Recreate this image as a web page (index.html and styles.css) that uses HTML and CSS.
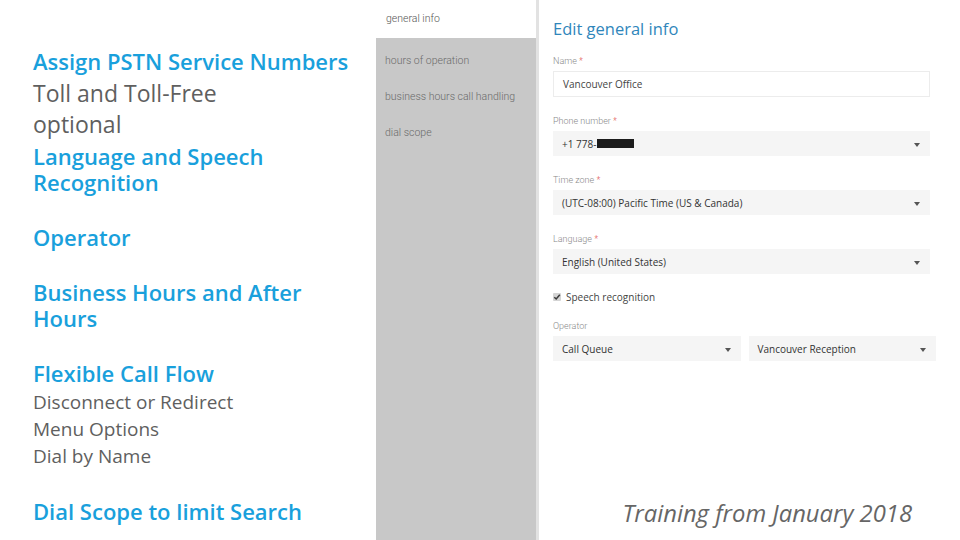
FILE: index.html
```html
<!DOCTYPE html>
<html>
<head>
<meta charset="utf-8">
<link rel="stylesheet" href="styles.css">
</head>
<body>
<div class="slide">
  <div class="points">
    <div class="group g-first">
      <div class="h">Assign PSTN Service Numbers</div>
      <div class="t">Toll and Toll-Free</div>
      <div class="t">optional</div>
      <div class="h">Language and Speech<br>Recognition</div>
    </div>
    <div class="group">
      <div class="h">Operator</div>
    </div>
    <div class="group">
      <div class="h">Business Hours and After<br>Hours</div>
    </div>
    <div class="group g-flow">
      <div class="h">Flexible Call Flow</div>
      <div class="s s-first">Disconnect or Redirect</div>
      <div class="s">Menu Options</div>
      <div class="s">Dial by Name</div>
    </div>
    <div class="group">
      <div class="h">Dial Scope to limit Search</div>
    </div>
  </div>

  <div class="nav">
    <div class="nav-top">general info</div>
    <div class="nav-panel">
      <div class="nav-item">hours of operation</div>
      <div class="nav-item">business hours call handling</div>
      <div class="nav-item">dial scope</div>
    </div>
  </div>

  <div class="main">
    <div class="form">
      <div class="title">Edit general info</div>

      <div class="field first">
        <div class="label">Name <span class="req">*</span></div>
        <div class="input">Vancouver Office</div>
      </div>

      <div class="field">
        <div class="label">Phone number <span class="req">*</span></div>
        <div class="select"><span class="val">+1 778-<span class="redact"></span></span><span class="caret"></span></div>
      </div>

      <div class="field">
        <div class="label">Time zone <span class="req">*</span></div>
        <div class="select"><span class="val">(UTC-08:00) Pacific Time (US &amp; Canada)</span><span class="caret"></span></div>
      </div>

      <div class="field">
        <div class="label">Language <span class="req">*</span></div>
        <div class="select"><span class="val">English (United States)</span><span class="caret"></span></div>
      </div>

      <div class="check-row">
        <span class="checkbox"><svg width="8" height="8" viewBox="0 0 8 8"><path d="M1.3 4.2 L3.2 6 L6.8 1.8" fill="none" stroke="#3a3a3a" stroke-width="1.5"/></svg></span>
        <span>Speech recognition</span>
      </div>

      <div class="field op">
        <div class="label">Operator</div>
        <div class="op-row">
          <div class="select"><span class="val">Call Queue</span><span class="caret"></span></div>
          <div class="select"><span class="val">Vancouver Reception</span><span class="caret"></span></div>
        </div>
      </div>
    </div>
    <div class="training">Training from January 2018</div>
  </div>
</div>
</body>
</html>
```

FILE: styles.css
```css
html, body {
  margin: 0;
  padding: 0;
  background: #ffffff;
}

.slide {
  width: 960px;
  height: 540px;
  display: flex;
  overflow: hidden;
  font-family: "Open Sans", "Liberation Sans", sans-serif;
}

/* Left column: bullet headings */
.points {
  width: 343px;
  padding: 48px 0 0 33px;
  display: flex;
  flex-direction: column;
  gap: 29px;
}

.group {
  display: flex;
  flex-direction: column;
}

.g-first {
  gap: 5.5px;
}

.g-flow {
  gap: 1px;
}

.h {
  color: #19a0dc;
  font-size: 22px;
  font-weight: 600;
  line-height: 26px;
  letter-spacing: 0;
}

.t {
  color: #5f5f5f;
  font-size: 23px;
  font-weight: 500;
  line-height: 26px;
}

.s {
  color: #5f5f5f;
  font-size: 19px;
  font-weight: 500;
  line-height: 26px;
}

.s-first {
  margin-top: 2px;
}

/* Middle navigation */
.nav {
  width: 160px;
  display: flex;
  flex-direction: column;
  border-right: 3px solid #e2e2e2;
  font-family: Roboto, "Liberation Sans", sans-serif;
  font-weight: 300;
  font-size: 10.5px;
}

.nav-top {
  height: 38px;
  line-height: 38px;
  padding-left: 10px;
  color: #555;
}

.nav-panel {
  flex: 1;
  background: #c8c8c8;
  padding-top: 5px;
}

.nav-item {
  line-height: 36px;
  padding-left: 9px;
  color: #6a6a6a;
}

/* Right form */
.main {
  flex: 1;
  display: flex;
  flex-direction: column;
  padding-left: 14px;
  padding-right: 24px;
}

.form {
  display: flex;
  flex-direction: column;
  width: 377px;
  padding-top: 17px;
}

.title {
  font-size: 16.5px;
  line-height: 24px;
  color: #2f86bb;
}

.field {
  display: flex;
  flex-direction: column;
  margin-top: 15px;
}

.field.first {
  margin-top: 11px;
}

.label {
  font-family: Roboto, "Liberation Sans", sans-serif;
  font-weight: 300;
  font-size: 9px;
  line-height: 19px;
  color: #8a8a8a;
}

.req {
  color: #e04848;
}

.input {
  height: 24px;
  border: 1px solid #ececec;
  padding-left: 9px;
  font-size: 10px;
  line-height: 24px;
  color: #444;
}

.select {
  height: 25px;
  background: #f5f5f5;
  display: flex;
  align-items: center;
  justify-content: space-between;
  padding: 0 10px 0 9px;
  font-size: 10px;
  color: #333;
}

.val {
  display: flex;
  align-items: center;
}

.redact {
  display: inline-block;
  width: 37px;
  height: 9px;
  background: #1c1c1c;
  margin-left: 1px;
}

.caret {
  width: 0;
  height: 0;
  border-left: 3.5px solid transparent;
  border-right: 3.5px solid transparent;
  border-top: 4px solid #555;
  margin-top: 2px;
}

.check-row {
  display: flex;
  align-items: center;
  gap: 5px;
  margin-top: 14px;
  height: 18px;
  font-size: 10px;
  color: #444;
}

.checkbox {
  width: 8px;
  height: 8px;
  background: #d4d4d4;
  border-radius: 1px;
  display: flex;
  align-items: center;
  justify-content: center;
}

.field.op {
  margin-top: 11px;
}

.op-row {
  display: flex;
  gap: 8px;
  width: 383px;
}

.op-row .select {
  flex: 1;
}

.training {
  margin-top: auto;
  align-self: flex-end;
  margin-bottom: 12px;
  margin-right: 24px;
  font-style: italic;
  font-size: 23.8px;
  line-height: 30px;
  color: #666666;
}
```
